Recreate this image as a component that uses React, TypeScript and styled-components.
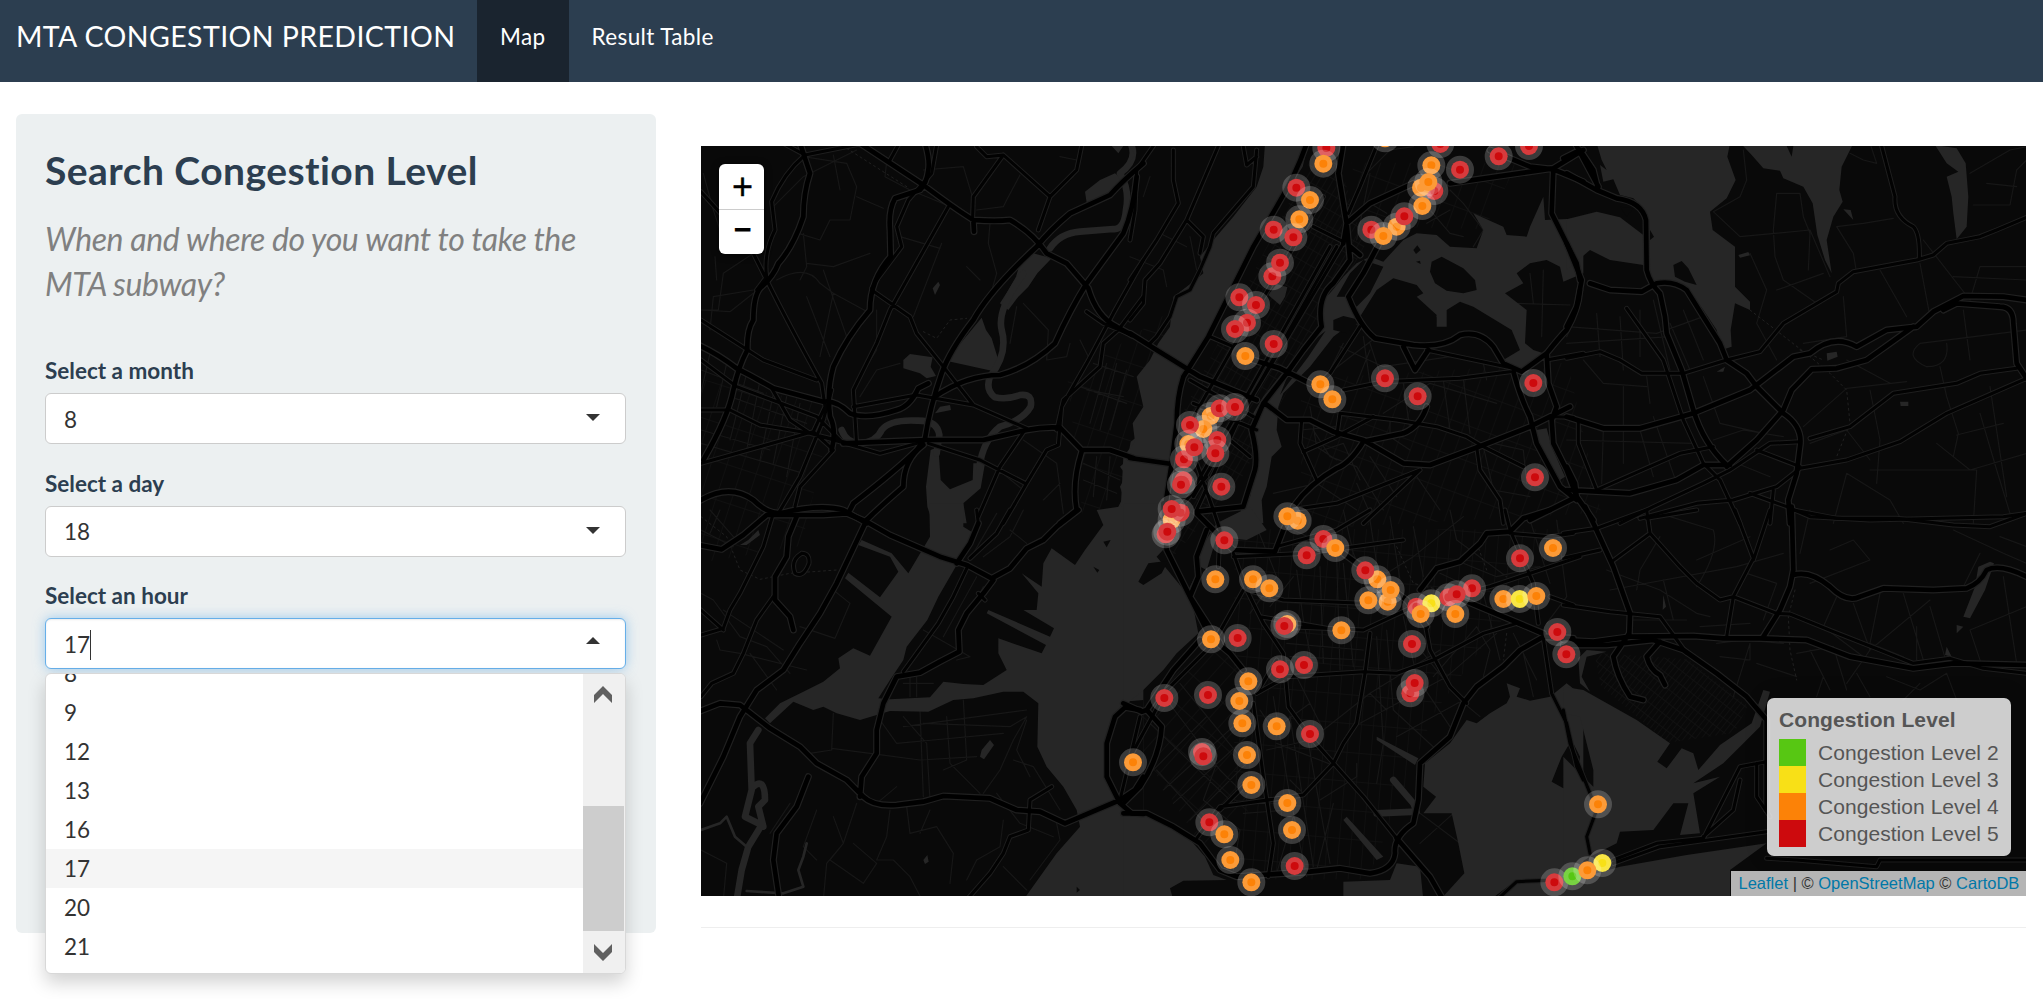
import React from "react";
import styled, { createGlobalStyle, css } from "styled-components";

const Global = createGlobalStyle`
  *, *::before, *::after { box-sizing: border-box; }
  body { margin: 0; background: #fff; font-family: Lato, "Liberation Sans", sans-serif; font-size: 22.5px; line-height: 32px; color: #2c3e50; }
  h3, h4 { margin: 0; }
`;

/* ---------- Page ---------- */
const Navbar = styled.nav`
  display: flex;
  height: 82px;
  padding-left: 16px;
  background: #2c3e50;
  color: #fff;
`;
const Brand = styled.span`
  width: 461px;
  padding-top: 20px;
  font-size: 28.5px;
  letter-spacing: 0.41px;
  white-space: nowrap;
`;
const NavTab = styled.a<{ $active?: boolean }>`
  padding: 21px 23px 0;
  letter-spacing: 0.38px;
  background: ${(p) => (p.$active ? "#1a242f" : "transparent")};
`;
const Body = styled.main`
  display: flex;
  align-items: flex-start;
  gap: 45px;
  min-height: 917px;
  padding: 32px 17px 0 16px;
`;
const Well = styled.aside`
  width: 640px;
  height: 819px;
  padding: 35px 30px 0 29px;
  border-radius: 6px;
  background: #ecf0f1;
`;
const Title = styled.h3`
  font-size: 39px;
  line-height: 43px;
  font-weight: 700;
  letter-spacing: 0.45px;
`;
const Lead = styled.h4`
  margin-top: 24px;
  font-size: 32px;
  line-height: 45px;
  font-weight: 400;
  font-style: italic;
  letter-spacing: -0.41px;
  color: #808080;
`;
const Field = styled.div`
  position: relative;
  height: 112.5px;
`;
const Fields = styled.div`
  margin-top: 47px;
`;
const Label = styled.label`
  display: block;
  height: 40px;
  padding-top: 2px;
  font-weight: 700;
`;
const SelectBox = styled.div<{ $open?: boolean }>`
  display: flex;
  align-items: center;
  justify-content: space-between;
  height: 51px;
  padding: 2px 25px 0 18px;
  border: 1px solid #ccc;
  border-radius: 6px;
  background: #fff;
  color: #333;
  ${(p) =>
    p.$open &&
    css`
      border-color: #66afe9;
      box-shadow: inset 0 1px 2px rgba(0, 0, 0, 0.075), 0 0 12px rgba(102, 175, 233, 0.6);
    `}
`;
const Value = styled.span`
  display: flex;
  align-items: center;
`;
const TextCursor = styled.i`
  width: 1px;
  height: 30px;
  background: #333;
`;
const Caret = styled.i<{ $up?: boolean }>`
  margin-bottom: 4px;
  border: 7px solid transparent;
  ${(p) =>
    p.$up
      ? "border-top: 0; border-bottom: 7px solid #333; margin-bottom: 8px;"
      : "border-bottom: 0; border-top: 7px solid #333;"}
`;
const Menu = styled.div`
  position: absolute;
  left: 0;
  top: 95px;
  z-index: 3;
  display: flex;
  width: 581px;
  height: 301px;
  overflow: hidden;
  border: 1px solid #d8d8d8;
  border-radius: 6px;
  background: #fff;
  box-shadow: 0 9px 18px rgba(0, 0, 0, 0.175);
`;
const Options = styled.div`
  flex: 1;
  margin-top: -20px;
`;
const Option = styled.div<{ $active?: boolean }>`
  height: 39px;
  padding: 4px 18px 0;
  color: #333;
  background: ${(p) => (p.$active ? "#f5f5f5" : "transparent")};
`;
const Scrollbar = styled.div`
  display: flex;
  flex-direction: column;
  width: 42px;
  padding: 12px 0;
  background: #f0f0f0;
`;
const Thumb = styled.div`
  height: 125px;
  margin: 103px 1px auto 0;
  background: #cdcdcd;
`;
const ScrollArrow = styled.svg`
  display: block;
  width: 20px;
  height: 17px;
  margin-left: 10px;
  fill: #606060;
`;
const Content = styled.section`
  flex: 1;
  padding-top: 32px;
`;
const Rule = styled.hr`
  height: 1px;
  margin: 31px 0 0;
  border: 0;
  background: #eee;
`;

/* ---------- Map ---------- */
const MapFrame = styled.div`
  position: relative;
  height: 750px;
  overflow: hidden;
  background: #090909;
  font-family: "Liberation Sans", Arial, sans-serif;
`;
const MapCanvas = styled.svg`
  display: block;
  width: 1325px;
  height: 750px;
`;
const ZoomControl = styled.div`
  position: absolute;
  left: 18px;
  top: 18px;
  width: 45px;
  height: 90px;
  border-radius: 6px;
  overflow: hidden;
  background: #fff;
  box-shadow: 0 1px 7px rgba(0, 0, 0, 0.65);
`;
const ZoomButton = styled.div`
  height: 45px;
  padding-left: 2px;
  font: 400 36px/45px "Liberation Sans", Arial, sans-serif;
  -webkit-text-stroke: 0.4px #000;
  text-align: center;
  color: #000;
  & + & {
    font-weight: 700;
    font-size: 31px;
    line-height: 40px;
    -webkit-text-stroke: 0;
    border-top: 1px solid #ccc;
  }
`;
const Legend = styled.div`
  position: absolute;
  right: 15px;
  bottom: 40px;
  width: 244px;
  height: 158px;
  padding: 9px 12px;
  border-radius: 7px;
  background: rgba(255, 255, 255, 0.8);
  box-shadow: 0 0 22px rgba(0, 0, 0, 0.2);
  color: #555;
  font-size: 21px;
  line-height: 27px;
  white-space: nowrap;
`;
const LegendTitle = styled.div`
  height: 32px;
  line-height: 26px;
  font-weight: 700;
  letter-spacing: 0.1px;
`;
const LegendRow = styled.div`
  display: flex;
  gap: 12px;
  letter-spacing: 0.05px;
`;
const Swatch = styled.i<{ $color: string }>`
  width: 27px;
  height: 27px;
  background: ${(p) => p.$color};
`;
const Attribution = styled.div`
  position: absolute;
  right: 0;
  bottom: 0;
  width: 295px;
  height: 25px;
  padding: 0 7.5px;
  background: rgba(255, 255, 255, 0.7);
  color: #333;
  font-size: 16.5px;
  line-height: 24px;
  white-space: nowrap;
  text-align: right;
`;
const Link = styled.a`
  color: #0078a8;
`;

interface Tile {
  at: [number, number];
  water: string;
  streams?: string;
  land?: string;
  motorways: string;
  primaries: string;
  streets: string;
  trails?: string;
}

/* Tile geometry, three units per screen pixel. */
const TILES: Tile[] = [
  {
    at: [-33, -48],
    water:
      "M1185 185L1230 150L1275 130L1300 150L1290 178L1225 205L1190 218Z M1265 48H1300L1285 70Z M1030 370L1085 385L1042 430L1015 470L985 500L955 540L930 520L955 480L978 440L990 400Z M875 563L888 600L905 625L925 690L905 722L768 692Z M640 690L660 672L728 682L722 710L738 738L710 745L690 730L640 715Z M745 950L722 960L708 1070L712 1130L728 1180L830 1180L820 1120L872 1075L885 1000L850 1000L848 1050L780 1078L752 1050Z M1360 905L1322 935L1312 990L1290 1010L1308 1035L1290 1070L1300 1100L1285 1130L1300 1180L1360 1180Z M750 830L780 825L783 840L735 850Z M728 475L745 455L750 465L735 495Z",
    streams:
      "M1322 40Q1345 90 1290 130Q1320 180 1308 240Q1302 300 1270 297L1170 305Q1110 310 1080 355 M1000 430Q920 540 935 600Q955 670 900 740Q885 780 915 802Q950 810 990 795Q1030 790 1022 830Q1000 870 930 890Q880 930 868 1010 M455 900Q470 940 510 940Q560 935 575 900Q600 868 680 872Q742 870 748 915L740 970",
    motorways:
      "M330 40Q345 85 360 130Q340 190 340 260Q310 350 265 400Q250 440 210 475Q190 500 190 570Q170 600 172 660Q145 710 130 780Q115 860 40 990 M25 645Q80 670 140 715Q190 740 250 775L400 815Q440 810 480 850Q530 870 620 840Q660 830 685 775L715 760 M510 40L700 165Q800 240 850 270Q920 275 960 270Q1030 310 1070 370L1130 400L1195 475Q1220 560 1280 590L1325 615 M705 40Q720 90 715 120Q710 160 690 180L615 205Q595 240 600 300L602 380Q540 450 540 540Q470 620 430 710Q410 780 420 860Q440 900 425 960 M1360 100Q1300 150 1260 195L1140 250Q1080 300 1040 350Q900 480 850 570Q780 660 755 730Q720 830 705 925L680 960Q620 1020 490 1120L480 1140 M1340 140Q1330 240 1300 310L1190 460Q1140 540 1095 640Q1020 710 930 735Q830 735 735 800 M460 940Q580 935 710 930L880 930L1010 900Q1060 890 1110 893L1175 960L1260 960L1330 984 M1175 965Q1145 1060 1160 1140L1110 1180 M700 945Q640 990 640 1070Q570 1130 530 1170 M33 1110Q120 1060 190 1110Q230 1150 270 1150Q390 1120 460 1140L530 1180 M850 270L852 305",
    primaries:
      "M280 40L345 75L520 40 M345 75Q280 130 245 215L255 300Q220 370 230 440L200 480 M33 185L110 270L190 370L235 460Q300 590 395 760L405 830 M740 45L725 130L655 210L620 290L635 350L560 450L545 475 M775 230L600 540L560 640L490 780L500 945 M545 480L660 560L680 610L760 710L850 825L1010 895 M490 830L680 795L850 825 M33 570L220 690L380 750 M33 690L140 770L380 860L460 940 M33 840L120 840L210 885L360 910L500 950L570 970L700 935 M245 775L300 870L360 910L500 945 M860 50L890 80L940 75L1080 200L1045 300 M940 75L850 200L848 260 M1175 48L1160 120L1080 200 M600 90L625 45 M1360 500L1285 600L1240 640L1230 710L1120 810L1100 900 M1360 390L1270 550L1190 700L1115 830L1105 945L1070 960L1010 1060L940 1180 M1190 545L1240 580L1325 615 M1005 900L930 1010L865 1160 M715 940L870 990L1005 1060 M405 830L370 905L430 960L330 1070L315 1130 M425 780L400 870L330 1040L265 1150 M33 1000L370 905",
    streets:
      "M340 80L470 100L500 170L480 270L420 270L390 330L325 310 M250 230L340 140L500 60 M430 75L450 180 M590 95L585 140L660 180 M190 370L100 430L85 540L33 540 M260 450Q350 400 390 460L430 490L540 550 M33 540L120 545L190 490 M75 380L80 450 M60 600L70 500L190 480 M340 310L350 410L330 450 M350 400L430 410L540 370 M500 200L580 235 M660 180L770 225 M700 120L820 110L850 210 M990 135L950 210L940 230L860 240 M900 280L895 340L920 430L900 500 M830 410L870 450 M980 530L960 640 M1000 520L1075 600L1070 690L1130 680L1140 640 M1115 170L1150 140 M1110 80L1160 90 M755 340L670 560 M630 320L750 355 M33 720L220 790M60 670L30 800M110 700L80 830M170 730L120 930M210 750L170 960M250 790L210 990M290 800L250 1000M330 820L290 1040M33 900L240 960M33 940L340 1030M120 800L350 880 M560 540L560 660L510 740 M1170 630L1200 690 M1170 770L1310 820 M1000 930L1100 1000L1120 1150 M900 1000L1000 1080 M630 700L560 720L510 800 M40 130L70 240L90 300 M1110 1060L1060 1110 M400 420L470 620M350 500L420 680M430 490L390 680 M1180 1000L1290 1050M1180 1050L1280 1090M1220 980L1210 1100M1260 980L1250 1110 M1210 700L1330 740M1190 780L1300 800M1280 700L1230 900M1310 720L1260 900M1250 700L1200 880",
    trails: "M470 55L650 170 M700 605L740 625L780 570L830 565",
  },
  {
    at: [1287, -48],
    water:
      "M405 40L535 40L518 110L460 200L400 310L320 440L240 610L170 720L145 770L138 850L130 960L115 1010L110 1100L85 1180L-30 1180L-20 980L15 935L8 880L40 830L20 740L60 690L85 640L120 590L130 500L170 470L220 430L210 380L250 330L310 260L380 170L400 110Z M760 395L820 330L860 310L920 315L960 350L1040 355L1060 300L1030 250L1120 290L1130 315L1190 320L1200 290L1240 200L1245 270L1360 265L1360 430L1300 455L1290 410L1250 390L1200 400L1160 430L1180 460L1125 490L1190 540L1185 640L1210 660L1240 670L1170 730L1120 690L1170 660L1145 600L1030 530L990 515L950 540L950 590L920 590L920 555L860 500L880 490L860 465L790 445L740 480L690 560L610 620L540 710L460 790L445 830L440 900L455 950L425 980L410 1070L395 1110L400 1180L340 1180L330 1130L360 1100L385 1000L365 930L370 850L400 800L480 700L560 610L580 570L565 520L600 490L640 440L680 400L720 380Z M415 495L440 462L472 472L465 500L450 525Z M1220 900L1250 895L1265 950L1305 1040L1290 1050L1250 980L1215 930Z M0 50L15 75L0 95Z",
    land:
      "M905 395L935 380L1000 415L1035 450L1040 480L1000 490L950 482L915 460L900 425Z M587 602L540 640L480 720L450 795L475 760L535 680Z M610 570L640 558L690 570L650 610L610 600Z M620 500L660 430L700 390L760 410L720 490L680 530L650 500Z M850 360L862 346L872 360L858 372Z M858 395L870 392L872 402Z",
    motorways:
      "M530 40Q500 130 440 230L370 350L300 490L235 620L160 740Q140 800 140 880L125 1000L110 1100L100 1180 M0 610L80 660L210 740L380 810 M0 984L125 1002 M640 40L625 130L650 280L660 390L610 460Q560 500 575 590L520 660L470 730L400 820L365 900Q385 980 375 1020L340 1130L200 1145 M660 350L690 375 M745 345L700 430L655 500Q690 590 735 625L850 645Q940 655 990 615Q1050 600 1090 650L1120 700L1175 725L1250 670Q1290 620 1310 600Q1345 540 1350 480 M370 690L450 715L540 760 M405 820L470 870L540 870L610 905L700 930L820 1000L900 1005L1060 945L1200 890L1320 830 M700 935Q660 1000 620 1015Q540 1060 490 1130 M1150 725Q1170 800 1200 860L1220 940L1290 1070L1340 1110 M640 340L650 280L720 220L850 160 M960 160L1270 115L1360 60 M1270 115L1265 250L1340 400L1350 450 M1080 60L1200 110L1270 118L1360 155 M820 650L855 720L895 660 M700 935L820 910Q870 890 890 830 M1250 670L1255 760L1280 830L1265 870L1270 940L1310 1020L1340 1100L1200 1170",
    primaries:
      "M70 48L20 120L15 240L0 330 M130 60L130 150L145 220L80 330L0 450 M265 48L170 270L90 400L45 450L40 520L0 570 M380 60L370 170L310 240L250 310L240 350L210 420L180 480L140 500L120 560L80 620L60 640 M170 270L220 320L210 370 M740 48L690 170L655 250 M550 290L640 335 M620 350L540 490L400 740L190 1100 M600 350L360 780L200 1060 M640 340L480 610L330 860L200 1140 M580 200L420 470L310 650L180 880 M240 620L310 650M180 750L370 860M190 820L380 900 M690 590L600 730L570 760 M640 780L760 755L990 745L1140 725 M630 850L800 870L920 890L1010 920L1060 950L1180 1010 M515 870L510 940L560 1050 M520 965L620 920L730 860 M890 660L1150 715 M1250 690L1360 670 M1040 950L1050 1020L1110 1110L1120 1180 M1270 860L1330 862 M480 1140L620 1120L870 1020 M870 1020L700 1180 M340 50L350 105L380 80 M630 850L620 920 M300 930L360 980 M100 1190L230 1040M200 1000L250 1140",
    streets:
      "M60 140L40 200 M0 380L100 420L110 470 M90 310L170 350 M180 320L200 420 M700 140L780 60L850 50 M720 130L680 330 M770 250L720 220 M960 180L1000 220L1060 300L1030 350 M900 240L960 310L1000 320 M890 280L960 240 M700 620L720 760 M720 640L760 760 M630 650L760 710L960 680 M610 720L740 620 M680 760L720 660 M820 760L840 900 M940 750L960 900 M1000 745L1020 910 M760 850L900 760L1100 820 M550 900L600 980L680 1010L760 1140 M580 960L640 940L690 1050 M720 980L800 1100 M1090 940L1180 960L1190 1060 M1060 950L1090 1080L1200 1100 M860 1040L930 1140 M1200 430L1210 520M1240 420L1235 620M1150 520L1320 525 M510 900L620 890 M540 830L560 950L620 990 M680 1060L720 1150 M430 1090L560 1060 M950 480L920 560 M650 560L690 590 M560 1060L680 1140 M780 870L780 920L840 960 M1060 700L1070 750 M640 640L600 720",
  },
  {
    at: [2607, -48],
    water:
      "M80 40L480 40L472 80L497 150L470 205L420 245L428 300L495 350L495 470L540 515L540 540L495 520L482 600L485 650L455 660L440 600L400 540L350 470L300 455L250 460L220 405L120 390L60 360L-10 420L-10 268L80 245L150 262L220 315L225 240L190 205L150 195L130 148L100 155L90 105L110 120L95 90Z M512 40L850 40L815 110L808 180L818 215L790 260L770 330L785 430L765 390L742 315L728 220L700 170L640 145L630 122L580 115L545 75Z M1095 45L1160 55L1187 100L1195 200L1190 290L1160 328L1150 250L1145 200L1130 140L1165 125L1130 100Z M770 670L800 665L803 680L772 692Z M990 815H1015V828H992Z M440 725L465 710L460 725Z M820 238L842 240L850 270Z M505 375L535 366L540 376L510 383Z",
    land: "M310 405L335 393L355 415L380 465L345 455L315 440Z M650 48L665 80L670 48Z M240 300L252 320L240 330Z M150 230L190 235L170 260Z",
    motorways:
      "M-20 85L30 60L70 120L85 180 M-10 130L80 180L140 205Q215 215 228 270L230 420Q240 460 270 490L285 560L290 610L335 720L370 840Q400 940 470 1005 M60 460L120 480L215 485L260 460Q310 450 350 480L400 560L450 640L470 690L530 730L560 770L640 850Q700 890 690 950L680 1030L655 1110L660 1180 M-10 340L35 450L20 530L-10 590 M-10 860L100 895L210 895L370 850L540 780L670 680L720 670Q790 610 860 650L950 600L1040 590L1090 545L1180 498L1300 500L1370 510 M470 1010L560 930L640 840L665 780L725 718L800 715L890 690L960 640L1030 590 M1120 540L1160 520L1290 530Q1330 530 1330 580L1340 700L1370 745 M-10 1080L180 1090L320 1050L400 1005L480 1005 M10 30L85 170 M-10 1010L15 1060L20 1100L70 1170",
    primaries:
      "M935 48L975 200Q970 260 1030 290Q1050 310 1048 385 M470 690L570 665L640 580L800 485L805 460L850 425L1040 390L1090 375L1130 340L1230 320L1280 300L1370 262 M170 535L280 690L340 870L400 1000L450 1050L510 1180 M-10 685L90 665L150 690L215 730L340 730L470 690 M720 925L840 890L970 790L1160 760L1230 730L1340 715 M690 1015L830 990L990 935L1130 850L1370 745 M560 960L690 1010 M690 935L600 940L480 1020L400 1060L250 1130L150 1180 M25 870L25 940L80 1080 M80 1080L330 970L430 950 M210 1165L380 1120L490 1110L620 1070L690 1015 M540 1090L650 1130L720 1160L900 1170L1300 1160L1370 1150 M610 1080L600 1180",
    streets:
      "M520 60L530 150L510 200L430 245L510 320L720 300L780 440 M620 190L690 190L700 260L720 310L715 420 M620 190L610 300L615 380L640 450L740 520 M800 290L880 280L970 265 M800 290L850 370L860 430 M540 370L590 480L560 580L620 690 M620 480L760 430 M1200 130L1320 60L1370 50 M1210 225L1320 225L1340 120L1370 90 M1250 160L1340 170 M1050 400L1080 560 M1060 330L1200 510L1230 410L1370 410 M1150 440L1370 450 M930 420L1010 560 M820 500L830 620L700 640 M900 40L920 100L880 90L840 70 M1180 540L1200 690 M1370 600L1050 640Q1000 680 1070 710Q1140 710 1130 640 M1110 710L1130 800L1165 910L1150 980 M900 780L930 930L920 1060 M700 890L830 775L1010 755 M830 690L960 760 M720 940L830 900L900 990 M830 1030L790 1180M830 1030L960 1110L1000 1180M900 1020L1220 1020L1210 1180M1100 940L1200 1020L1370 970 M1230 850L1280 1020L1320 1150 M1260 770L1310 1100 M1160 915L1300 880 M80 550L90 680 M150 560L160 720M210 540L210 680M20 550L-10 620M250 510L300 720 M300 580L360 720M340 540L400 690 M-10 640L300 620 M-10 590L260 610L400 560 M40 690L100 760L230 770 M160 770L160 1000M230 740L240 820 M100 900L95 1060M210 900L250 1040 M-10 930L370 940 M430 930L520 900L640 920 M250 860L320 1060 M500 1000L600 1040 M400 740L450 880L580 910",
    trails: "M540 540L720 680L780 730L830 780L840 880L800 980 M690 660L760 690",
  },
  {
    at: [-33, 1092],
    water:
      "M718 -20L820 -20L820 50L852 70L800 165L745 260L712 330L650 410L640 450L600 510L565 565L600 568L720 562L760 515L820 522L880 525L950 480L925 430L925 385L1055 430L1068 405L890 310L895 300L1080 380L1092 355L1000 300L1040 300L1045 250L995 190L1055 230L1060 160L1085 115L1155 165L1185 120L1240 45L1220 0L1360 -20L1360 1170L1000 1170L1100 1030L1170 950L1160 900L1120 830L1070 770L1042 710L1045 580L1000 545L940 545L850 565L790 570L715 605L600 603L510 630L440 610L400 590L370 600L310 575L240 640L225 625L270 580L340 545L400 515L450 475L445 445L490 415L540 437L605 320L465 205L475 188L570 262L625 185L600 140L505 105L515 90L605 130L655 190L720 80Z M875 720L900 690L912 705L882 748L870 740Z M175 90L205 60L210 75L170 105L150 105Z M700 1050L712 1035L716 1055L705 1062Z",
    streams:
      "M205 660L180 700L185 840L165 920L215 945L175 1010L155 1080L140 1170 M190 830Q225 800 225 870L205 890L220 950",
    land: "M1360 570L1300 575L1275 620L1245 700L1245 780L1270 850L1320 920L1360 930Z M1240 95L1262 90L1250 112Z M1210 170L1228 180L1222 188Z M1160 1130L1170 1140L1160 1148Z",
    motorways:
      "M25 105L95 118L160 75L230 15L400 15L470 10L530 35L600 75L750 140L830 165L905 205L960 175L1010 115L1060 90L1100 50L1165 0 M530 30L440 220L390 310L330 400L280 480L200 540L150 620L100 740L30 880 M25 605L90 580L150 585L240 655L330 710L380 760L470 810L520 860Q550 890 620 885L700 875L760 858L900 865L980 900L1050 905L1125 940L1290 870L1335 840L1360 800 M320 20L295 80L290 140L255 200L255 270L300 320L310 360 M800 160L840 100L865 40 M355 800L320 890L260 970L250 1050L268 1170 M510 860L515 800L560 730L560 660L580 580L620 500L690 488L750 455L808 425L805 360L830 310L880 250L910 210 M1350 600L1305 592L1275 620L1250 700L1250 800L1290 880L1325 910L1360 912",
    primaries:
      "M250 10L220 110L150 250L120 300L100 355L33 375 M100 360L33 300 M250 260L200 330L160 430L130 490L65 520L33 560 M835 165L790 260L745 340L640 485 M960 0L920 70L840 145 M865 250L885 270 M1085 830L1020 870L1015 960L960 980L940 1030L900 1090L830 1170 M1350 620L1290 870 M865 40L860 0 M335 130Q300 150 315 190Q340 205 357 160Q360 130 335 130",
    streets:
      "M33 60L130 110M60 0L130 80M90 0L60 70 M33 250L70 270L150 380L230 410L300 490M80 390L90 420L150 430L350 480M100 300L280 420M180 430L260 540 M480 280L435 385L330 350 M430 240L480 280 M430 610L425 720L360 730 M425 715L540 730L690 750L860 740 M570 630L620 700L730 690L940 670 M640 620L710 700L720 870 M700 640L960 650L1010 620L970 690L930 780L880 850 M690 600L700 860 M770 620L780 760L870 850 M820 570L830 750L760 780 M640 650L1010 600 M1010 630L980 720L1020 800 M970 750L1030 770L1110 900 M500 880L460 1000L420 1050L520 1120L560 1060L490 1000 M600 900L590 980L560 1050L610 1050L660 1100L690 1158 M650 890L660 970L740 950L790 1030L780 1120 M720 900L690 970 M380 900L340 1010L380 1050 M400 1170L410 1060L460 1000L430 920 M560 880L620 830 M940 930L930 1010L860 1050L830 1110 M1100 940L1110 990L1020 1110 M940 1070L1010 1140 M860 200L760 380M880 230L800 380M820 190L740 350 M33 1020L110 1060L100 1170 M700 360L840 440L800 450 M640 520H730 M660 500V560M680 500V560 M920 850L990 940L1090 980 M920 10L850 130M1000 0L960 80L880 140 M960 60L1010 100 M240 970L300 880",
    trails: "M33 20L110 80L150 180L210 208L300 190L440 180",
  },
  {
    at: [1287, 1092],
    water:
      "M-20 -20L88 -20L108 110L80 140L170 250L205 180L180 240L205 370L140 430L100 480L40 540L-20 590Z M200 165L215 110L260 40L360 -10L410 60L350 90L260 80L230 180Z M-20 910L70 918L130 950L190 1000L225 1040L250 1095L290 1110L160 1112L120 1135L130 1170L-20 1170Z M640 1115L780 1110L800 1060L870 1070L880 1170L640 1170Z M1140 560L1130 520L1170 535L1160 560L1200 572L1260 560L1310 520L1360 560L1360 1170L1100 1170L1160 1110L1080 1170L930 1170L1003 1090L985 1000L965 910L880 910L918 860L880 830L885 760L960 700L1010 630L1040 640L1080 610L1130 580Z M740 680L865 745L855 765L740 690Z M650 920L760 1040L740 1050L640 930Z",
    streams: "M790 810L850 880L860 905L740 910",
    land: "M25 215L55 160L115 152L95 190L40 225Z M1265 815L1295 740L1325 690L1350 740L1340 830L1300 835Z M1330 960L1360 965V990L1330 985Z",
    motorways:
      "M100 -20L110 120L175 250L240 380L300 430L340 480 M230 60L200 140L205 200L180 260L270 400 M200 10L250 60L310 120L435 125L460 60L490 0 M210 390L130 480L50 600L35 605L-20 580 M50 600L95 650Q90 740 30 830L-20 880 M-20 910L50 910L130 950L210 1000L270 1080L320 1100L540 1085L630 1075L720 1090Q790 1080 795 1030Q790 980 850 940L865 870L870 760L960 680L1000 580L1040 530L1120 470L1170 420L1240 380L1330 385 M800 985L900 1100L940 1170 M870 240L920 175L990 155L1050 100L1070 70L1140 65L1180 25L1260 0 M1000 270L1240 370 M640 130L830 270L890 350",
    primaries:
      "M310 130L350 240L400 340L460 430L475 590L540 680L620 770L700 860L800 985 M350 240L460 270L700 280 M310 140L530 130L820 90 M480 350L700 360L850 290L1080 230L1350 140 M390 320L620 360 M720 370L705 490L680 640L640 700L610 760L520 855L270 890L200 985 M380 550L470 500L700 485L800 490L910 450L1060 370L1160 340L1230 370 M885 340L900 420L960 530L1010 580 M1240 385L1265 550L1310 640L1340 770L1360 810 M1125 0L1140 60L1210 220L1225 340 M340 240L250 400L110 540L-10 760 M370 580L400 800L430 1000L415 1100 M440 450L380 550 M340 830L270 900 M1100 1170L1160 1115L1280 1110 M1260 260L1330 285 M1140 70L1260 80L1330 70 M250 0L270 60L265 170 M440 110L620 60L720 0",
    streets:
      "M110 570L270 780L340 850M150 520L330 740M60 640L320 890M80 780L280 1000 M30 820L230 620M100 840L320 640M130 880L350 680M180 930L370 740 M430 560L480 860L530 1100M480 620L550 1070M530 670L600 1060 M440 700L620 770M410 720L540 690M480 810L520 850 M570 870L680 800L680 760M560 1080L610 880 M390 600L430 660L540 580 M500 500L580 660L720 550L770 600 M550 480L520 330L500 180 M580 460L570 170M630 480L620 140M670 470L640 160 M470 400L700 420M480 440L700 450 M740 380L760 700L740 820 M770 360L790 600L920 720 M820 320L860 500L960 650 M720 550L930 420M690 640L950 500L1100 370M800 680L1000 570 M880 430L990 570L1050 620 M910 500L1040 350L1080 420L1060 500 M930 190L1060 250L1110 450 M1000 160L1100 200L1230 170 M720 30L740 160M780 20L810 210 M490 60L770 190L850 140L1000 20M640 0L670 130L720 250 M380 50L440 200L360 310 M490 200L420 290 M850 50L880 200M960 0L980 90L1130 200 M1200 30L1260 220M1280 30L1310 260L1250 340 M1150 370L1220 510 M1180 430L1210 560 M870 1000L970 910M870 910L990 1000 M260 760L220 870L330 960L310 1080 M490 920L440 1090M340 910L480 900",
    trails: "M800 110L850 220L930 240 M1040 100L1070 180 M1130 370L1120 450",
  },
  {
    at: [2607, 1092],
    water:
      "M-20 530L40 540L120 585L200 630L300 700L262 755L290 775L335 715L370 730L385 780L450 705L545 640L580 540L600 545L570 650L460 760L370 820L450 800L370 850L390 970L330 975L355 880L310 880L250 960L150 965L140 1000L60 1040L-20 1090L-20 850L-20 740L70 830L70 780L30 620L-20 610Z M-20 1170L10 1110L150 1070L350 1035L590 1000L480 1080L480 1170Z M1260 155L1272 160L1245 240L1200 325L1180 320L1215 230L1225 170Z M1160 345L1180 350L1160 370Z M1130 410L1145 440L1125 435Z M280 255L288 290L278 300Z M25 445L50 420L110 425L50 440L35 500L60 545L30 520Z",
    motorways:
      "M45 -10L75 50L130 170L180 310L178 370L130 440Q140 500 180 560L220 570 M-20 390L70 395L180 380L370 378L460 385L570 385L710 390L840 440L1030 475L1150 460L1370 465 M665 -10L670 180L660 230L630 300L580 380 M670 195Q720 180 780 230Q830 280 870 260L940 235L1090 240L1190 235Q1230 220 1250 180Q1290 160 1370 200 M-20 405L110 405L250 390L340 420L440 490L530 560L590 630L590 900 M270 395L230 440Q240 480 270 495L285 525",
    primaries:
      "M-20 70L80 55L230 0L240 70L330 170L380 220L450 270L490 260L620 310L660 312L790 365L930 420L1030 460L1140 445L1240 475L1370 490 M-20 145L90 120 M125 155L240 70 M495 0L550 145L490 260L470 380 M600 0L550 150 M-20 285L120 305L270 320L350 430 M670 0L800 25L900 25L980 25L1150 45L1260 50L1370 10 M230 25L380 0 M-20 600L0 700L40 800L80 900L50 980L60 1030 M130 1050L260 1000L400 985L510 770L590 755 M130 1060L270 1010L590 965 M510 810L490 900L400 980 M590 1045L680 1050L920 1070L930 1050L1370 1050 M560 760L560 860L600 920",
    streets:
      "M110 180L270 240L380 310L420 320 M270 80L210 180L200 240 M300 20L430 60Q450 120 380 230 M120 240L500 170L640 130 M380 150L540 80 M180 330L350 330 M310 330L280 210 M530 190L620 220L580 330 M390 350L540 340 M690 130L720 0 M720 220L900 150L850 90L780 120 M800 260L760 350L880 440 M850 280L900 420L830 520 M930 250L900 400L1000 440 M1000 250L1060 450M1040 350L1040 450 M900 420L1080 270 M1080 290L1130 460 M1230 130L1180 230 M1290 80L1370 110 M1150 60L1300 130L1370 160 M1300 200L1340 460 M1240 480L1200 360L1370 290 M680 430L790 410L830 540 M440 400L520 390L640 400 M450 440L540 450L540 400L490 560 M560 460L680 500 M860 490L900 560M720 420L780 540M950 500L1050 540L1130 490L1160 570 M1050 520L1000 570 M760 500L740 560",
    trails: "M675 240L655 320L660 420L680 510",
  },
];

const LEVELS = { G: "#57c713", Y: "#f8e017", O: "#fc8207", R: "#cd0a0d" };
type Level = keyof typeof LEVELS;

const STATIONS: { at: [number, number]; list: string }[] = [
  {
    at: [1287, -48],
    list:
      "R589,54 O580,101 R499,173 O540,210 R431,299 O508,268 R490,322 R427,439 R450,398 R328,502 R378,525 R351,578 R315,597 R431,642 O346,678 O571,763 O607,808 R765,745 R863,799 R1210,759 R1215,1042 O765,25 R931,42 O904,106 R990,119 R1106,79 R1197,48 R913,183 O873,173 O895,156 O877,228 R724,299 O800,290 O760,318 R823,259 O242,858 O220,897 R269,835 R315,831 R180,885 R262,930 R256,970 O175,942 R162,988 R193,952 R160,1051 R153,1064 R274,1070 O125,1170 R152,1148 R125,1137 R107,1213 R112,1205 O503,1172 O472,1159",
  },
  {
    at: [1287, 1092],
    list:
      "R283,91 R580,87 O616,114 R530,136 O256,208 O369,208 O418,235 O742,208 R706,181 O773,275 O782,240 O715,271 R859,290 Y904,280 O872,312 R955,262 R1026,235 R980,253 O976,312 R1170,145 O1269,114 O1120,267 Y1169,267 O1219,258 R1282,366 R1309,433 O472,342 R463,348 O634,361 O243,388 R323,384 R846,402 R841,550 R854,519 R450,478 R522,465 O355,514 O328,573 O337,640 O440,649 R540,672 O351,735 O364,825 R103,564 R234,555 R216,726 R220,739 O9,757 O472,879 O486,960 R494,1068 R238,937 O283,973 O301,1050 O364,1117 R1273,1117 G1327,1099 Y1417,1059 O1372,1081 O1404,883",
  },
];

const GRIDS = [
  { id: "manhattan", angle: 30, gap: 18, area: "M1850 0L1900 0L1990 300L1830 600L1620 1000L1400 1250L1420 850Z" },
  { id: "queens", angle: 20, gap: 42, area: "M1800 700L2600 650L2700 1100L1800 1150Z M1950 50L2450 50L2350 250L2000 240Z" },
  { id: "brooklyn", angle: 5, gap: 36, area: "M1600 1150L2600 1150L2200 1700L2000 2200L1600 2200Z" },
  { id: "bayridge", angle: 42, gap: 40, area: "M1250 1700L1620 1450L1640 2000L1500 2100Z" },
  { id: "newark", angle: 18, gap: 46, area: "M0 700L400 780L300 1200L0 1250Z M1100 700L1400 500L1340 900L1150 1150Z" },
  { id: "airport", angle: 38, gap: 14, area: "M2680 1520L2960 1540L3140 1680L3100 1760L2900 1790L2700 1620Z" },
];

const Line = styled.path<{ $w: number; $c: string; $dash?: boolean }>`
  fill: none;
  stroke: ${(p) => p.$c};
  stroke-width: ${(p) => p.$w};
  stroke-linecap: round;
  stroke-linejoin: round;
  ${(p) => p.$dash && "stroke-dasharray: 6 10;"}
`;
const Dot = styled.circle`
  stroke: #fff;
  stroke-width: 30;
  stroke-opacity: 0.2;
`;

const layer = (draw: (t: Tile) => React.ReactNode) =>
  TILES.map((t) => (
    <g key={t.at.join()} transform={`translate(${t.at[0]} ${t.at[1]})`}>
      {draw(t)}
    </g>
  ));

function SubwayMap() {
  return (
    <MapCanvas viewBox="0 0 3975 2250">
      <defs>
        {GRIDS.map((g) => (
          <pattern key={g.id} id={g.id} width={g.gap} height={g.gap * 2.4} patternUnits="userSpaceOnUse" patternTransform={`rotate(${g.angle})`}>
            <path d={`M0 0V${g.gap * 2.4}M0 0H${g.gap}`} stroke="#121212" strokeWidth="4" />
          </pattern>
        ))}
      </defs>
      <rect width="3975" height="2250" fill="#090909" />
      {GRIDS.map((g) => (
        <path key={g.id} d={g.area} fill={`url(#${g.id})`} />
      ))}
      {layer((t) => <Line d={t.streets} $w={3.5} $c="#171717" />)}
      {layer((t) => (
        <>
          <path d={t.water} fill="#262626" />
          {t.streams && <Line d={t.streams} $w={20} $c="#262626" />}
          {t.land && <path d={t.land} fill="#090909" />}
        </>
      ))}
      <Line d="M0 2052L57 2032L77 2012L102 2072L137 2102 M317 2092L307 2132L292 2172L307 2222L247 2242L137 2235" $w={8} $c="#262626" />
      {layer((t) => t.trails && <Line d={t.trails} $w={3} $c="#202020" $dash />)}
      {layer((t) => <Line d={t.primaries} $w={15} $c="#1e1e1e" />)}
      {layer((t) => <Line d={t.motorways} $w={21} $c="#202020" />)}
      {layer((t) => <Line d={t.primaries} $w={9} $c="#020202" />)}
      {layer((t) => <Line d={t.motorways} $w={14} $c="#000" />)}
      {STATIONS.map((s) => (
        <g key={s.at.join()} transform={`translate(${s.at[0]} ${s.at[1]})`}>
          {s.list.split(" ").map((m) => {
            const [cx, cy] = m.slice(1).split(",").map(Number);
            return <Dot key={m} cx={cx} cy={cy} r={27} fill={LEVELS[m[0] as Level]} />;
          })}
        </g>
      ))}
    </MapCanvas>
  );
}

const LEGEND: [string, string][] = [
  ["Congestion Level 2", LEVELS.G],
  ["Congestion Level 3", LEVELS.Y],
  ["Congestion Level 4", LEVELS.O],
  ["Congestion Level 5", LEVELS.R],
];
const HOURS = ["8", "9", "12", "13", "16", "17", "20", "21"];

export default function App() {
  return (
    <>
      <Global />
      <Navbar>
        <Brand>MTA CONGESTION PREDICTION</Brand>
        <NavTab $active>Map</NavTab>
        <NavTab>Result Table</NavTab>
      </Navbar>
      <Body>
        <Well>
          <Title>Search Congestion Level</Title>
          <Lead>When and where do you want to take the MTA subway?</Lead>
          <Fields>
            <Field>
              <Label>Select a month</Label>
              <SelectBox>
                8<Caret />
              </SelectBox>
            </Field>
            <Field>
              <Label>Select a day</Label>
              <SelectBox>
                18
                <Caret />
              </SelectBox>
            </Field>
            <Field>
              <Label>Select an hour</Label>
              <SelectBox $open>
                <Value>
                  17
                  <TextCursor />
                </Value>
                <Caret $up />
              </SelectBox>
              <Menu>
                <Options>
                  {HOURS.map((h) => (
                    <Option key={h} $active={h === "17"}>
                      {h}
                    </Option>
                  ))}
                </Options>
                <Scrollbar>
                  <ScrollArrow viewBox="0 0 20 17">
                    <path d="M1 9L10 0L19 9V17L10 8L1 17Z" />
                  </ScrollArrow>
                  <Thumb />
                  <ScrollArrow viewBox="0 0 20 17">
                    <path d="M1 8L10 17L19 8V0L10 9L1 0Z" />
                  </ScrollArrow>
                </Scrollbar>
              </Menu>
            </Field>
          </Fields>
        </Well>
        <Content>
          <MapFrame>
            <SubwayMap />
            <ZoomControl>
              <ZoomButton>+</ZoomButton>
              <ZoomButton>−</ZoomButton>
            </ZoomControl>
            <Legend>
              <LegendTitle>Congestion Level</LegendTitle>
              {LEGEND.map(([name, color]) => (
                <LegendRow key={name}>
                  <Swatch $color={color} />
                  {name}
                </LegendRow>
              ))}
            </Legend>
            <Attribution>
              <Link>Leaflet</Link> | © <Link>OpenStreetMap</Link> © <Link>CartoDB</Link>
            </Attribution>
          </MapFrame>
          <Rule />
        </Content>
      </Body>
    </>
  );
}
